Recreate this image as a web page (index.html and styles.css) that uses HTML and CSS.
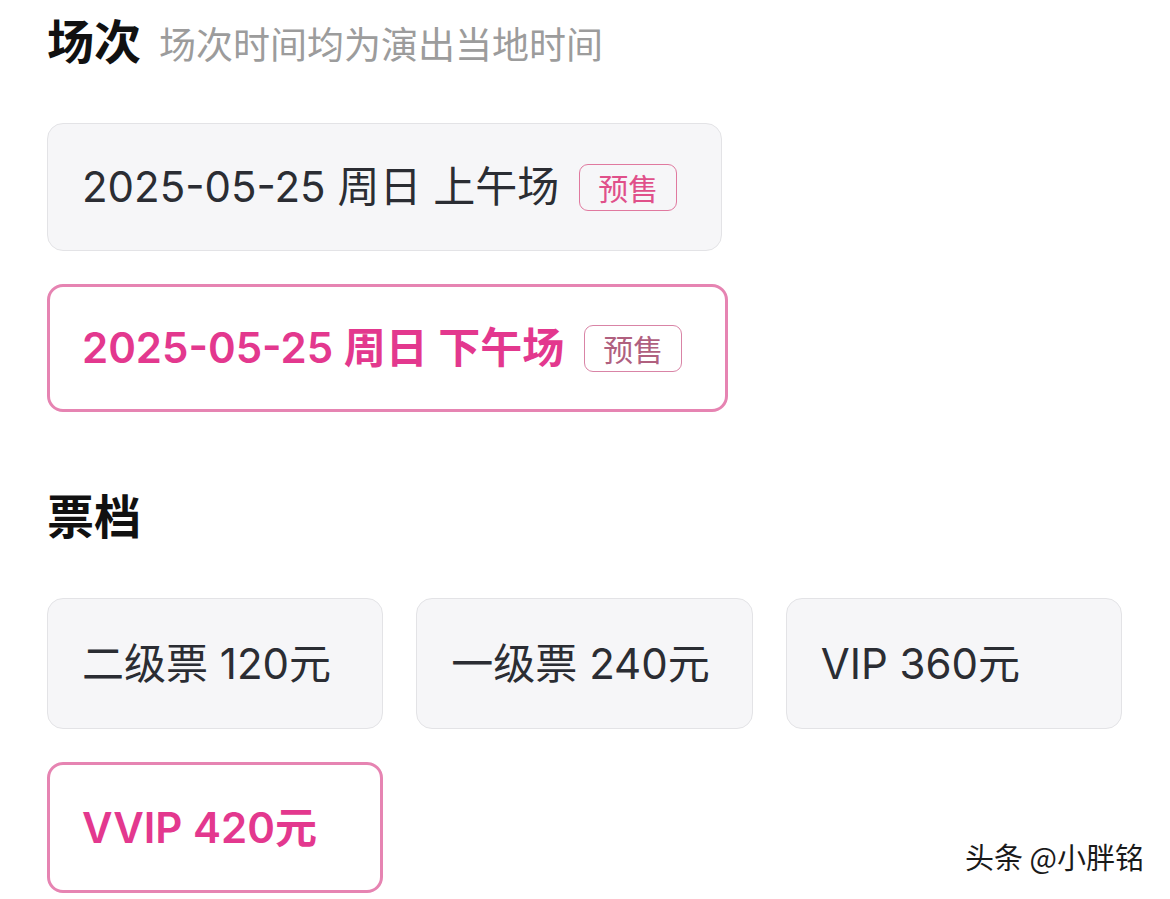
FILE: index.html
```html
<!DOCTYPE html>
<html lang="zh-CN">
<head>
<meta charset="utf-8">
<link rel="stylesheet" href="styles.css">
</head>
<body>
<main class="page">
  <section class="section">
    <div class="head">
      <h2 class="head-title">场次</h2>
      <span class="head-sub">场次时间均为演出当地时间</span>
    </div>
    <div class="sessions">
      <div class="option session">
        <span class="label">2025-05-25 周日 上午场</span>
        <span class="badge">预售</span>
      </div>
      <div class="option session is-active">
        <span class="label">2025-05-25 周日 下午场</span>
        <span class="badge">预售</span>
      </div>
    </div>
  </section>
  <section class="section section-tickets">
    <div class="head">
      <h2 class="head-title">票档</h2>
    </div>
    <div class="tickets">
      <div class="option ticket"><span class="label">二级票 120元</span></div>
      <div class="option ticket"><span class="label">一级票 240元</span></div>
      <div class="option ticket"><span class="label">VIP 360元</span></div>
      <div class="option ticket is-active"><span class="label">VVIP 420元</span></div>
    </div>
  </section>
  <div class="watermark">头条 @小胖铭</div>
</main>
</body>
</html>
```

FILE: styles.css
```css
* { box-sizing: border-box; }
html, body { margin: 0; padding: 0; background: #fff; }
body {
  font-family: "Inter", "Noto Sans CJK SC", sans-serif;
  color: #2b2d33;
}
.page {
  position: relative;
  width: 1170px;
  height: 899px;
  padding: 9px 48px 0 47px;
  overflow: hidden;
}
.head {
  display: flex;
  align-items: baseline;
  height: 60px;
  line-height: 60px;
}
.head-title {
  margin: 0;
  font-size: 47px;
  font-weight: 700;
  color: #111;
  font-family: "Noto Sans CJK SC", sans-serif;
}
.head-sub {
  margin-left: 18px;
  font-size: 37px;
  color: #9c9c9c;
  font-family: "Noto Sans CJK SC", sans-serif;
  font-weight: 400;
}
.sessions {
  margin-top: 54px;
  display: flex;
  flex-direction: column;
  align-items: flex-start;
  gap: 33px;
}
.option {
  display: flex;
  align-items: center;
  background: #f6f6f8;
  border: 1px solid #e3e3e6;
  border-radius: 16px;
  font-size: 42px;
  line-height: 1;
}
.option .label { white-space: nowrap; }
.session {
  height: 128px;
  padding: 0 44px 0 34px;
}
.badge {
  margin-left: 20px;
  height: 47px;
  padding: 0 18px;
  display: flex;
  align-items: center;
  border: 1px solid #e0799f;
  border-radius: 9px;
  font-size: 30px;
  color: #e0508a;
  font-family: "Noto Sans CJK SC", sans-serif;
}
.option.is-active {
  background: #fff;
  border: 3px solid #e684b2;
  color: #e3388e;
  font-weight: 600;
}
.session.is-active { padding-left: 32px; padding-right: 43px; }
.is-active .badge {
  color: #b0607f;
  border-color: #d984a6;
  font-weight: 400;
}
.section-tickets { margin-top: 72px; }
.tickets {
  margin-top: 54px;
  display: grid;
  grid-template-columns: repeat(3, 1fr);
  gap: 33px;
}
.ticket {
  height: 131px;
  padding: 0 34px;
}
.ticket.is-active { padding-left: 32px; }
.watermark {
  position: absolute;
  right: 26px;
  bottom: 22px;
  font-size: 29px;
  color: #1a1a1a;
  font-family: "Noto Sans CJK SC", sans-serif;
  text-shadow: 1px 1px 0 #fff, -1px -1px 0 #fff, 1px -1px 0 #fff, -1px 1px 0 #fff;
}
```
